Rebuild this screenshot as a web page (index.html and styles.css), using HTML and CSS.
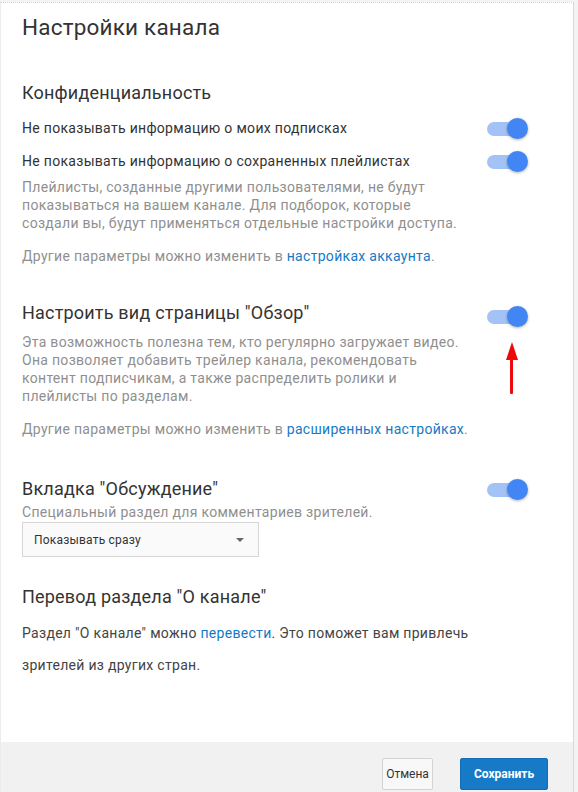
FILE: index.html
```html
<!DOCTYPE html>
<html lang="ru">
  <head>
    <meta charset="UTF-8" />
    <meta name="viewport" content="width=device-width, initial-scale=1.0" />
    <title>Настройки канала</title>
    <link rel="stylesheet" href="styles.css">
  </head>
  <body>
    <div class="dialog">
      <div class="dialog-body">
        <h1 class="dialog-title">Настройки канала</h1>

        <!-- Конфиденциальность -->
        <section class="section section-privacy">
          <h2 class="section-title">Конфиденциальность</h2>
          <div class="option-row">
            <span>Не показывать информацию о моих подписках</span>
            <span class="toggle"></span>
          </div>
          <div class="option-row">
            <span>Не показывать информацию о сохраненных плейлистах</span>
            <span class="toggle"></span>
          </div>
          <p class="hint hint-block">
            Плейлисты, созданные другими пользователями, не будут<br>
            показываться на вашем канале. Для подборок, которые<br>
            создали вы, будут применяться отдельные настройки доступа.
          </p>
          <p class="hint hint-more">
            Другие параметры можно изменить в <a href="#">настройках аккаунта</a>.
          </p>
        </section>

        <!-- Обзор -->
        <section class="section section-browse">
          <div class="section-head">
            <h2 class="section-title">Настроить вид страницы "Обзор"</h2>
            <span class="toggle toggle-low"></span>
          </div>
          <div class="pointer-wrap">
            <p class="hint hint-block">
              Эта возможность полезна тем, кто регулярно загружает видео.<br>
              Она позволяет добавить трейлер канала, рекомендовать<br>
              контент подписчикам, а также распределить ролики и<br>
              плейлисты по разделам.
            </p>
            <span class="red-arrow"></span>
          </div>
          <p class="hint hint-more">
            Другие параметры можно изменить в <a href="#">расширенных настройках</a>.
          </p>
        </section>

        <!-- Обсуждение -->
        <section class="section section-discussion">
          <div class="section-head">
            <h2 class="section-title">Вкладка "Обсуждение"</h2>
            <span class="toggle"></span>
          </div>
          <p class="hint">Специальный раздел для комментариев зрителей.</p>
          <div class="select">
            <span>Показывать сразу</span>
            <span class="select-caret"></span>
          </div>
        </section>

        <!-- О канале -->
        <section class="section section-about">
          <h2 class="section-title">Перевод раздела "О канале"</h2>
          <p class="about-text">
            Раздел "О канале" можно <a href="#">перевести</a>. Это поможет вам привлечь<br>
            зрителей из других стран.
          </p>
        </section>
      </div>

      <div class="dialog-footer">
        <button class="btn btn-cancel">Отмена</button>
        <button class="btn btn-save">Сохранить</button>
      </div>
    </div>
  </body>
</html>
```

FILE: styles.css
```css
* {
  padding: 0;
  margin: 0;
  box-sizing: border-box;
}

body {
  font-family: Roboto, "Liberation Sans", sans-serif;
  font-size: 14px;
  letter-spacing: 0.3px;
  color: #333;
  background-color: #f3f3f3;
  height: 792px;
  overflow: hidden;
}

a {
  color: #167ac6;
  text-decoration: none;
}

.dialog {
  display: flex;
  flex-direction: column;
  width: 574px;
  height: 790px;
  margin-top: 2px;
  background: #fff;
  border-top: 1px dotted #d6d6d6;
  border-left: 1px solid #ececec;
  border-right: 1px solid #d9d9d9;
}

.dialog-body {
  flex: 1;
  padding: 10px 45px 0 21px;
}

.dialog-title {
  font-size: 22.5px;
  font-weight: 400;
  line-height: 28px;
  letter-spacing: 0.2px;
  color: #333;
}

.section-title {
  font-size: 18px;
  font-weight: 400;
  line-height: 24px;
  letter-spacing: 0.2px;
  color: #333;
}

.section-privacy {
  margin-top: 40px;
}

.option-row {
  display: flex;
  align-items: center;
  justify-content: space-between;
  height: 20px;
  margin-top: 13px;
  line-height: 20px;
}

.hint {
  line-height: 18px;
  color: #8f8f8f;
}

.hint-block {
  margin-top: 7px;
}

.hint-more {
  margin-top: 15px;
}

.section-head {
  display: flex;
  align-items: flex-start;
  justify-content: space-between;
}

.section-browse {
  margin-top: 36px;
}

.section-browse .hint-block {
  margin-top: 6px;
}

.section-discussion {
  margin-top: 39px;
}

.section-discussion .toggle {
  margin-top: 2px;
}

.section-discussion .hint {
  margin-top: 2px;
}

.section-about {
  margin-top: 28px;
}

.about-text {
  margin-top: 8px;
  line-height: 32px;
  color: #444;
}

/* переключатель */
.toggle {
  position: relative;
  flex-shrink: 0;
  width: 41px;
  height: 21px;
}

.toggle::before {
  position: absolute;
  top: 4px;
  left: 0;
  width: 36px;
  height: 14px;
  content: "";
  background: #a3c3f7;
  border-radius: 7px;
}

.toggle::after {
  position: absolute;
  top: 0;
  right: 0;
  width: 21px;
  height: 21px;
  content: "";
  background: #4285f4;
  border-radius: 50%;
  box-shadow: 0 1px 3px rgba(0, 0, 0, 0.3);
}

.toggle-low {
  margin-top: 5px;
}

/* красная стрелка */
.pointer-wrap {
  position: relative;
}

.red-arrow {
  position: absolute;
  top: 9px;
  left: 484px;
  width: 14px;
  height: 52px;
}

.red-arrow::before {
  position: absolute;
  top: 0;
  left: 0;
  content: "";
  border-left: 6px solid transparent;
  border-right: 6px solid transparent;
  border-bottom: 18px solid #ee0a0a;
}

.red-arrow::after {
  position: absolute;
  top: 16px;
  left: 4px;
  width: 3px;
  height: 36px;
  content: "";
  background: #ee0a0a;
  border-radius: 1px;
}

/* выпадающий список */
.select {
  display: flex;
  align-items: center;
  justify-content: space-between;
  width: 237px;
  height: 35px;
  margin-top: 1px;
  padding: 0 14px 0 11px;
  font-size: 12px;
  letter-spacing: 0.2px;
  color: #333;
  background: #fafafa;
  border: 1px solid #d6d6d6;
}

.select-caret {
  border-left: 4px solid transparent;
  border-right: 4px solid transparent;
  border-top: 4px solid #666;
}

/* нижняя панель */
.dialog-footer {
  display: flex;
  justify-content: flex-end;
  align-items: flex-start;
  gap: 27px;
  height: 50px;
  padding: 16px 25px 0 0;
  background: #f1f1f1;
}

.btn {
  height: 32px;
  padding: 0 10px;
  font-family: Roboto, "Liberation Sans", sans-serif;
  font-size: 12px;
  font-weight: 500;
  border-radius: 2px;
  cursor: pointer;
}

.btn-cancel {
  width: 51px;
  padding: 0;
  font-weight: 400;
  color: #333;
  background: #f8f8f8;
  border: 1px solid #d3d3d3;
}

.btn-save {
  width: 88px;
  color: #fff;
  font-weight: 700;
  background: #167ac6;
  border: 1px solid #126db3;
}
```
